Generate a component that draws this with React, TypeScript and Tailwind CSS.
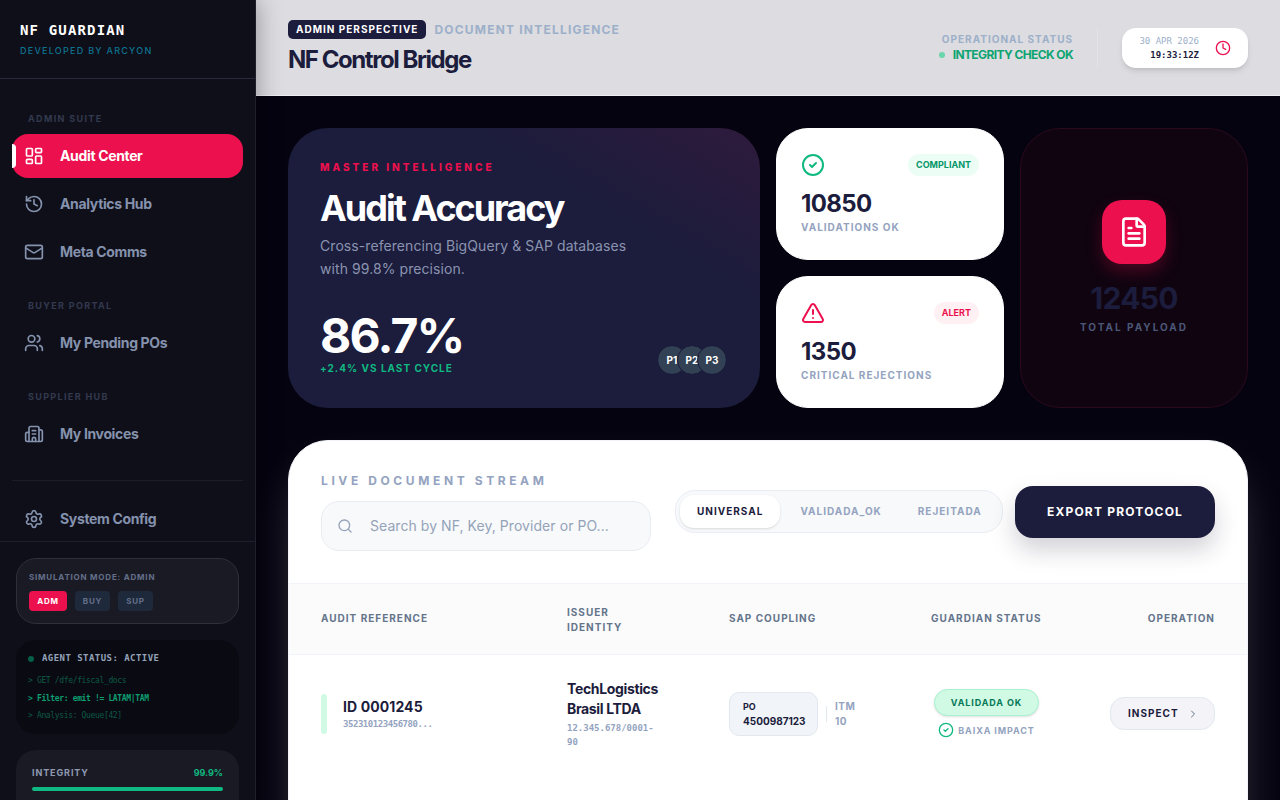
import {
  Building2,
  ChevronRight,
  CircleCheck,
  Clock,
  FileText,
  History,
  LayoutDashboard,
  Mail,
  Search,
  Settings,
  TriangleAlert,
  Users,
} from 'lucide-react';
import type { ReactNode } from 'react';

const sans = "font-['Inter','Noto_Sans',sans-serif]";
const mono = "font-['DejaVu_Sans_Mono','Liberation_Mono',monospace]";

function NavItem({ icon, label, active }: { icon: ReactNode; label: string; active?: boolean }) {
  return (
    <div
      className={
        active
          ? 'relative flex h-11 items-center gap-4 rounded-2xl bg-[#ec114e] pl-3 text-white'
          : 'relative flex h-11 items-center gap-4 rounded-2xl pl-3 text-[#8492ad]'
      }
    >
      {active && <div className="absolute left-0 top-[10px] h-6 w-1 rounded-r bg-white" />}
      {icon}
      <span className="text-sm font-bold tracking-tight">{label}</span>
    </div>
  );
}

function NavLabel({ children }: { children: ReactNode }) {
  return (
    <div className="mb-2 h-[15px] pl-4 text-[9px] font-bold uppercase leading-[15px] tracking-[0.15em] text-[#333a4e]">
      {children}
    </div>
  );
}

function Sidebar() {
  return (
    <aside className="relative z-10 flex h-[800px] w-64 shrink-0 flex-col overflow-hidden border-r border-[#1f1f2e] bg-[#0f0f1a] shadow-[0_0_24px_rgba(0,0,0,0.35)]">
      <div className="h-[79px] shrink-0 border-b border-[#28283c] pl-5 pt-[21px]">
        <div className={`text-sm font-bold leading-[18px] tracking-[1.15px] text-white ${mono}`}>NF GUARDIAN</div>
        <div className="mt-[5px] text-[9px] font-medium leading-[14px] tracking-[0.14em] text-[#0e7490]">
          DEVELOPED BY ARCYON
        </div>
      </div>

      <nav className="shrink-0 px-3 pt-8">
        <NavLabel>Admin Suite</NavLabel>
        <div className="flex flex-col gap-1">
          <NavItem active icon={<LayoutDashboard size={20} />} label="Audit Center" />
          <NavItem icon={<History size={20} />} label="Analytics Hub" />
          <NavItem icon={<Mail size={20} />} label="Meta Comms" />
        </div>
        <div className="mt-6">
          <NavLabel>Buyer Portal</NavLabel>
          <NavItem icon={<Users size={20} />} label="My Pending POs" />
        </div>
        <div className="mt-6">
          <NavLabel>Supplier Hub</NavLabel>
          <NavItem icon={<Building2 size={20} />} label="My Invoices" />
        </div>
        <div className="mt-6 border-t border-[#1c1c2a] pt-4">
          <NavItem icon={<Settings size={20} />} label="System Config" />
        </div>
      </nav>

      <div className="flex flex-col gap-4 border-t border-[#1f1f2e] p-4">
        <div className="h-[66px] rounded-[20px] border border-[#2f2f3b] bg-[#1a1a25] px-3 pt-[11px]">
          <div className="text-[8px] font-bold leading-[14px] tracking-[0.1em] text-[#64708a]">SIMULATION MODE: ADMIN</div>
          <div className="mt-[7px] flex gap-2 text-[8px] font-bold tracking-[0.1em]">
            <div className="flex h-5 w-[38px] items-center justify-center rounded bg-[#ec114e] text-white">ADM</div>
            <div className="flex h-5 w-[35px] items-center justify-center rounded bg-[#1e293b] text-[#64708a]">BUY</div>
            <div className="flex h-5 w-[35px] items-center justify-center rounded bg-[#1e293b] text-[#64708a]">SUP</div>
          </div>
        </div>

        <div className={`h-[94px] rounded-[20px] bg-[#0a0a13] px-[12px] pt-[12px] ${mono}`}>
          <div className="flex items-center gap-2 text-[9px] font-bold leading-[13px] tracking-[0.05em] text-[#94a3b8]">
            <span className="size-[6px] rounded-full bg-[#065f46]" />
            AGENT STATUS: ACTIVE
          </div>
          <div className="mt-[7px] flex flex-col text-[8px] leading-[17.5px] tracking-[-0.35px]">
            <span className="text-[#0b5a45]">&gt; GET /dfe/fiscal_docs</span>
            <span className="font-bold text-[#0d9f70]">&gt; Filter: emit != LATAM|TAM</span>
            <span className="text-[#0b5a45]">&gt; Analysis: Queue[42]</span>
          </div>
        </div>

        <div className="h-[80px] shrink-0 rounded-[20px] bg-[#1a1a25] px-4 pt-[16px]">
          <div className="flex items-center justify-between text-[9px] font-bold leading-[14px]">
            <span className="tracking-[0.1em] text-[#8f9ab2]">INTEGRITY</span>
            <span className="text-[#10b981]">99.9%</span>
          </div>
          <div className="mt-[7px] h-1 rounded-full bg-[#10b981]" />
        </div>
      </div>
    </aside>
  );
}

function Header() {
  return (
    <header className="flex h-24 shrink-0 items-center justify-between border-b border-[#eeeef1] bg-[#dcdce1] pl-8 pr-8">
      <div>
        <div className="flex items-center gap-2">
          <span className="flex h-[19px] items-center rounded-[5px] bg-[#1c1c3c] px-2 text-[10px] font-bold tracking-[0.1em] text-white">
            ADMIN PERSPECTIVE
          </span>
          <span className="pt-px text-xs font-bold tracking-[0.1em] text-[#9db0c9]">DOCUMENT INTELLIGENCE</span>
        </div>
        <h1 className="mt-[5px] text-2xl font-bold leading-[32px] tracking-[-0.06em] text-[#1c1c3c]">NF Control Bridge</h1>
      </div>
      <div className="flex items-center">
        <div className="flex flex-col items-end">
          <span className="text-[10px] font-bold leading-[14px] tracking-[0.1em] text-[#9db0c9]">OPERATIONAL STATUS</span>
          <span className="mt-[1px] flex items-center gap-2 text-xs font-bold leading-[16px] tracking-[-0.05em] text-[#0ea472]">
            <span className="size-[6px] rounded-full bg-[#6ad5ab]" />
            INTEGRITY CHECK OK
          </span>
        </div>
        <div className="mx-6 h-10 w-px bg-[#e4e4e8]" />
        <div className="flex h-10 w-[126px] items-center justify-end gap-4 rounded-[14px] bg-white pr-[17px] shadow-md">
          <div className={`flex flex-col items-end text-[9px] leading-[14px] ${mono}`}>
            <span className="text-[#9db0c9]">30 APR 2026</span>
            <span className="font-bold text-[#1c1c3c]">19:33:12Z</span>
          </div>
          <Clock size={16} className="text-[#ec114e]" />
        </div>
      </div>
    </header>
  );
}

function Hero() {
  return (
    <div className="col-span-2 row-span-2 flex flex-col rounded-[40px] bg-linear-to-bl from-[#2e1a3c] via-[#1c1c3c] via-30% to-[#1c1c3c] px-8 pt-[32px]">
      <div className="text-[10px] font-extrabold leading-[15px] tracking-[0.3em] text-[#ec114e]">MASTER INTELLIGENCE</div>
      <h2 className="mt-[13px] text-4xl font-bold leading-[40px] tracking-[-0.056em] text-white">Audit Accuracy</h2>
      <p className="mt-[6px] text-sm font-normal leading-[23px] tracking-[0.07px] text-[#8a94b0]">
        Cross-referencing BigQuery &amp; SAP databases
        <br />
        with 99.8% precision.
      </p>
      <div className="mt-auto flex items-end justify-between pb-[32px]">
        <div>
          <div className="text-5xl font-bold leading-[48px] tracking-[-0.0375em] text-white">86.7%</div>
          <div className="mt-[1px] text-[10px] font-bold leading-[15px] tracking-[0.1em] text-[#10b981]">+2.4% VS LAST CYCLE</div>
        </div>
        <div className="flex -space-x-2 pb-[2px] pr-[2px]">
          <Avatar label="P1" />
          <Avatar label="P2" />
          <Avatar label="P3" />
        </div>
      </div>
    </div>
  );
}

function Avatar({ label }: { label: string }) {
  return (
    <div className="flex size-7 items-center justify-center rounded-full bg-[#334155] text-[10px] font-bold text-white outline outline-[1.5px] outline-[#1c1c3c]">
      {label}
    </div>
  );
}

function StatCard(props: { icon: ReactNode; badge: string; badgeClass: string; value: string; label: string }) {
  return (
    <div className="h-[132px] rounded-[32px] border border-white bg-white p-6">
      <div className="flex items-center justify-between">
        {props.icon}
        <span className={`flex h-[22px] items-center rounded-full px-2 text-[9px] font-bold ${props.badgeClass}`}>{props.badge}</span>
      </div>
      <div className="mt-[11px] text-2xl font-bold leading-[32px] tracking-tight text-[#1c1c3c]">{props.value}</div>
      <div className="text-[10px] font-bold leading-[15px] tracking-[0.1em] text-[#94a3c0]">{props.label}</div>
    </div>
  );
}

function PayloadCard() {
  return (
    <div className="row-span-2 flex flex-col items-center rounded-[40px] border border-[#2a0a1c] bg-[#100410] pt-[71px]">
      <div className="flex size-16 items-center justify-center rounded-[20px] bg-[#ec114e] text-white shadow-[0_8px_16px_rgba(236,17,78,0.25)]">
        <FileText size={32} />
      </div>
      <div className="mt-[16px] text-3xl font-bold leading-[36px] tracking-tight text-[#1c1c3c]">12450</div>
      <div className="mt-[4px] text-[10px] font-bold leading-[15px] tracking-[0.2em] text-[#4b5878]">TOTAL PAYLOAD</div>
    </div>
  );
}

function StreamCard() {
  return (
    <section className="mt-8 h-[500px] shrink-0 rounded-[40px] border border-[#f1f5f9] bg-white shadow-[0_25px_50px_-12px_rgba(255,255,255,0.25)]">
      <div className="flex items-center gap-6 border-b border-[#f1f4f8] px-8 pb-8 pt-[31px]">
        <div className="w-[330px]">
          <div className="pt-px text-xs font-bold leading-[16px] tracking-[0.3em] text-[#94a3c0]">LIVE DOCUMENT STREAM</div>
          <div className="mt-[12px] flex h-[50px] items-center rounded-[18px] border border-[#e8ecf3] bg-[#f8f9fb] pl-[15px]">
            <Search size={16} className="shrink-0 text-[#94a3b8]" />
            <input
              readOnly
              placeholder="Search by NF, Key, Provider or PO..."
              className="ml-[17px] w-full bg-transparent text-sm tracking-[0.06px] text-[#1c1c3c] outline-none placeholder:text-[#94a3b8]"
            />
          </div>
        </div>
        <div className="flex flex-1 items-center gap-3">
          <div className="flex h-[43px] w-[328px] items-center gap-[2px] rounded-[20px] border border-[#e8ecf3] bg-[#f8f9fb] px-1 text-[10px] font-bold tracking-[0.1em]">
            <span className="flex h-[33px] items-center rounded-[14px] bg-white px-[17px] text-[#1c1c3c] shadow">UNIVERSAL</span>
            <span className="px-[18px] text-[#94a3c0]">VALIDADA_OK</span>
            <span className="px-[16px] text-[#94a3c0]">REJEITADA</span>
          </div>
          <div className="flex h-[52px] flex-1 items-center justify-center rounded-[18px] bg-[#1c1c3c] text-xs font-bold tracking-[0.1em] text-white shadow-[0_12px_24px_rgba(28,28,60,0.2)]">
            EXPORT PROTOCOL
          </div>
        </div>
      </div>

      <div className="grid h-[71px] grid-cols-[246px_162px_202px_1fr_auto] items-center border-b border-[#f1f4f8] bg-[#fbfbfc] px-8 text-[10px] font-bold leading-[15px] tracking-[0.1em] text-[#64748b]">
        <span className="pb-[2px]">AUDIT REFERENCE</span>
        <span className="pt-[2px]">
          ISSUER
          <br />
          IDENTITY
        </span>
        <span className="pb-[2px]">SAP COUPLING</span>
        <span className="pb-[2px]">GUARDIAN STATUS</span>
        <span className="pb-[2px]">OPERATION</span>
      </div>

      <div className="grid grid-cols-[246px_162px_202px_1fr_auto] items-center px-8 pt-[23px]">
        <div className="flex items-center gap-4">
          <div className="h-10 w-[6px] rounded-full bg-[#d1fae5]" />
          <div>
            <div className="text-sm font-bold leading-[20px] tracking-[0.1px] text-[#1c1c3c]">ID 0001245</div>
            <div className={`text-[9px] font-bold leading-[14px] tracking-[-0.45px] text-[#94a3c0] ${mono}`}>352310123456780...</div>
          </div>
        </div>
        <div className="pt-px">
          <div className="text-sm font-bold leading-[20px] tracking-tight text-[#1c1c3c]">
            TechLogistics
            <br />
            Brasil LTDA
          </div>
          <div className={`mt-[2px] text-[9px] font-bold leading-[14px] text-[#94a3c0] ${mono}`}>
            12.345.678/0001-
            <br />
            90
          </div>
        </div>
        <div className="flex items-center gap-2">
          <div className="flex h-[44px] w-[89px] flex-col justify-center rounded-[10px] border border-[#e2e8f0] bg-[#f1f5f9] pl-[13px]">
            <span className="text-[9px] font-bold leading-[15px] text-[#1c1c3c]">PO</span>
            <span className="text-[10px] font-bold leading-[15px] text-[#1c1c3c]">4500987123</span>
          </div>
          <div className="h-4 w-px bg-[#e2e8f0]" />
          <div className="flex flex-col text-[10px] font-bold leading-[15px] tracking-[0.05em] text-[#94a3c0]">
            <span>ITM</span>
            <span>10</span>
          </div>
        </div>
        <div className="flex w-[111px] flex-col items-center">
          <span className="flex h-[27px] w-[105px] items-center justify-center rounded-full border border-[#a7f3d0] bg-[#d1fae5] text-[9px] font-bold tracking-[0.1em] text-[#047857] shadow-sm">
            VALIDADA OK
          </span>
          <span className="mt-[6px] flex items-center gap-[4px] text-[9px] font-bold leading-[15px] tracking-[0.1em] text-[#94a3c0]">
            <CircleCheck size={16} className="text-[#10b981]" />
            BAIXA IMPACT
          </span>
        </div>
        <div className="flex h-[33px] w-[105px] items-center gap-[8px] rounded-[14px] border border-[#e2e8f0] bg-[#f4f4f8] pl-[17px] text-[10px] font-bold tracking-[0.1em] text-[#1c1c3c]">
          INSPECT
          <ChevronRight size={12} className="text-[#64748b]" />
        </div>
      </div>
    </section>
  );
}

export default function App() {
  return (
    <div className={`flex h-[800px] w-[1280px] overflow-hidden bg-[#05030f] ${sans}`}>
      <Sidebar />
      <div className="flex min-w-0 flex-1 flex-col">
        <Header />
        <main className="flex flex-1 flex-col overflow-hidden px-8 pt-8">
          <div className="grid shrink-0 grid-cols-4 grid-rows-[132px_132px] gap-4">
            <Hero />
            <StatCard
              icon={<CircleCheck size={24} className="text-[#10b981]" />}
              badge="COMPLIANT"
              badgeClass="bg-[#ecfdf5] text-[#059669]"
              value="10850"
              label="VALIDATIONS OK"
            />
            <PayloadCard />
            <StatCard
              icon={<TriangleAlert size={24} className="text-[#ec114e]" />}
              badge="ALERT"
              badgeClass="bg-[#fff1f3] text-[#ec114e]"
              value="1350"
              label="CRITICAL REJECTIONS"
            />
          </div>
          <StreamCard />
        </main>
      </div>
    </div>
  );
}
